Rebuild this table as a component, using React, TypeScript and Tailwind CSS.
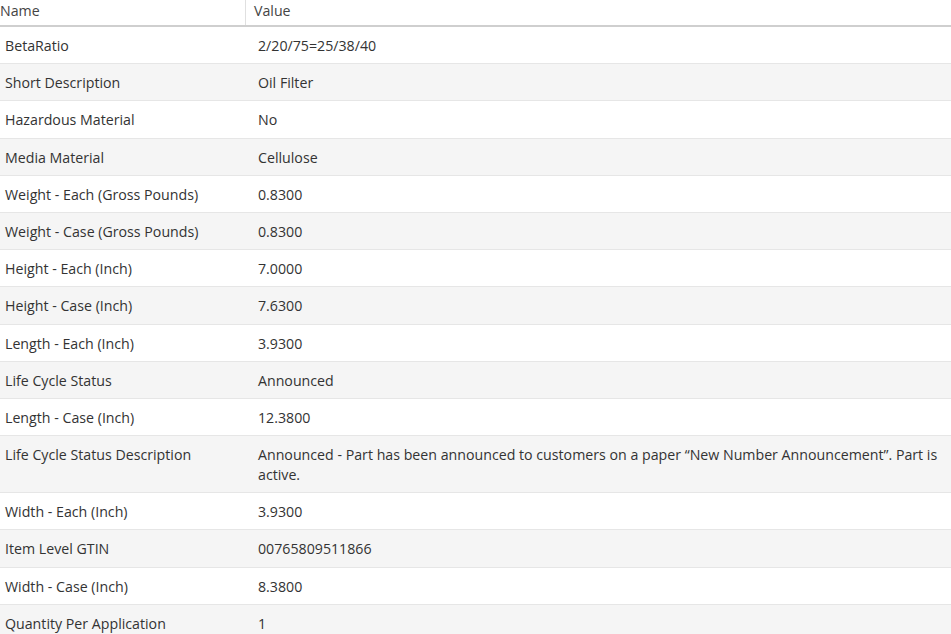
const rows: [string, string][] = [
  ["BetaRatio", "2/20/75=25/38/40"],
  ["Short Description", "Oil Filter"],
  ["Hazardous Material", "No"],
  ["Media Material", "Cellulose"],
  ["Weight - Each (Gross Pounds)", "0.8300"],
  ["Weight - Case (Gross Pounds)", "0.8300"],
  ["Height - Each (Inch)", "7.0000"],
  ["Height - Case (Inch)", "7.6300"],
  ["Length - Each (Inch)", "3.9300"],
  ["Life Cycle Status", "Announced"],
  ["Length - Case (Inch)", "12.3800"],
  [
    "Life Cycle Status Description",
    "Announced - Part has been announced to customers on a paper \u201cNew Number Announcement\u201d. Part is active.",
  ],
  ["Width - Each (Inch)", "3.9300"],
  ["Item Level GTIN", "00765809511866"],
  ["Width - Case (Inch)", "8.3800"],
  ["Quantity Per Application", "1"],
];

export default function App() {
  return (
    <div
      className="w-[951px] h-[634px] overflow-hidden bg-white text-[14.2px] leading-5 text-[#333]"
      style={{ fontFamily: '"Open Sans", sans-serif' }}
    >
      {/* Header */}
      <div className="grid grid-cols-[246px_1fr] h-[27px] border-b-2 border-[#cfcfcf] text-[#444]">
        <div className="pt-[1px] border-r border-[#e0e0e0]">Name</div>
        <div className="pt-[1px] pl-2">Value</div>
      </div>

      {/* Rows */}
      {rows.map(([name, value], i) => (
        <div
          key={name}
          className={`grid grid-cols-[246px_1fr] border-b border-[#e6e6e6] ${
            i % 2 === 1 ? "bg-[#f5f5f5]" : "bg-white"
          }`}
        >
          <div className="pl-[5px] pr-2 pt-[9px] pb-[7.2px]">{name}</div>
          <div className="pl-3 pr-2 pt-[9px] pb-[7.2px]">{value}</div>
        </div>
      ))}
    </div>
  );
}
